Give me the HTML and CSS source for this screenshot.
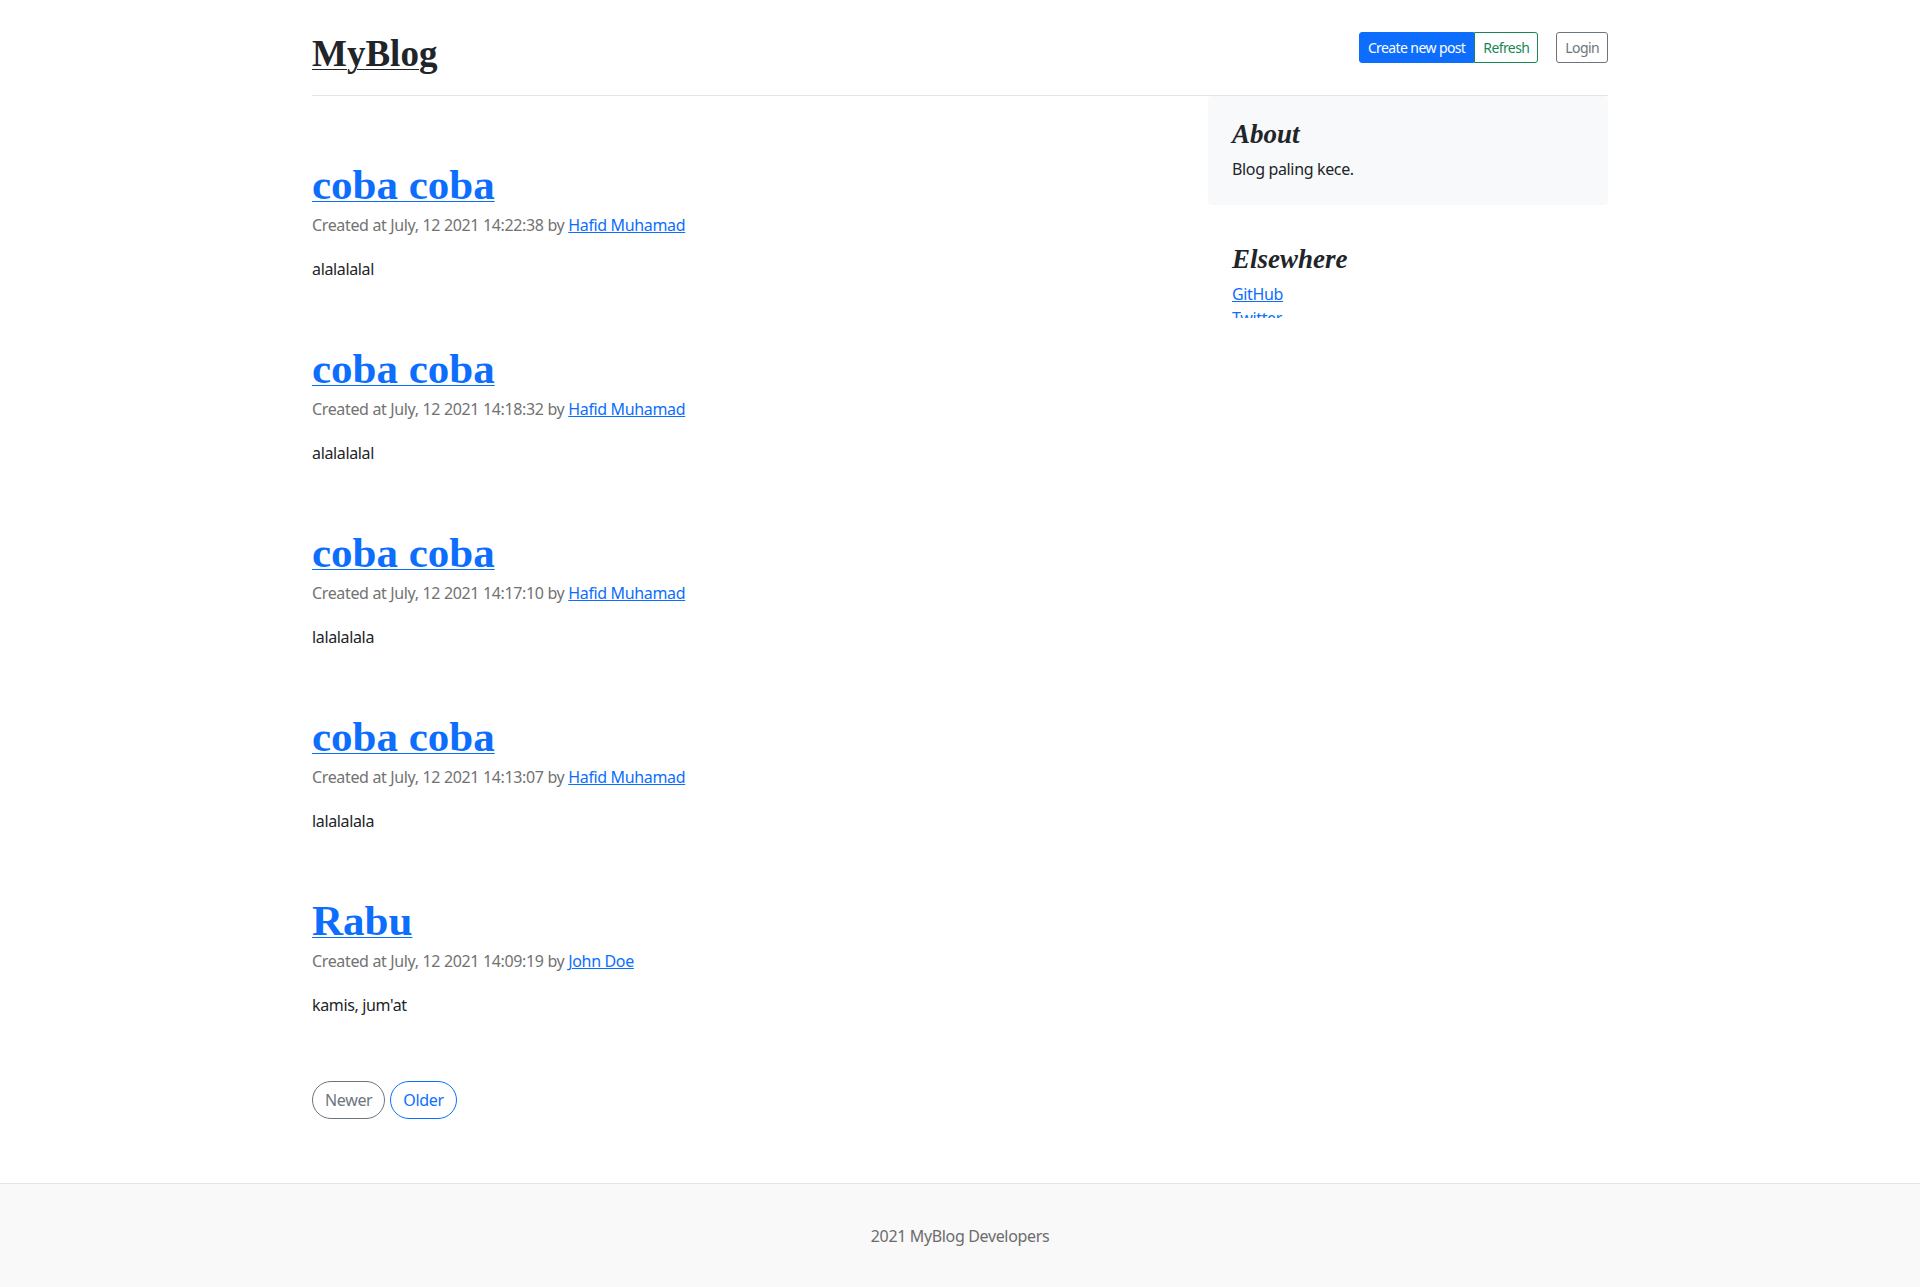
FILE: index.html
```html
<!DOCTYPE html>
<html lang="en">
<head>
<meta charset="utf-8">
<title>MyBlog</title>
<link rel="stylesheet" href="styles.css">
</head>
<body>
<div class="container">
  <header class="blog-header">
    <div class="header-row">
      <a class="blog-header-logo" href="#">MyBlog</a>
      <div class="header-actions">
        <div class="btn-group">
          <a class="btn btn-sm btn-primary" href="#">Create new post</a>
          <a class="btn btn-sm btn-outline-success" href="#">Refresh</a>
        </div>
        <a class="btn btn-sm btn-outline-secondary" href="#">Login</a>
      </div>
    </div>
  </header>

  <main class="row">
    <div class="col-main">
      <article class="blog-post">
        <h2 class="blog-post-title"><a href="#">coba coba</a></h2>
        <p class="blog-post-meta">Created at July, 12 2021 14:22:38 by <a href="#">Hafid Muhamad</a></p>
        <div class="blog-post-body">alalalalal</div>
      </article>
      <article class="blog-post">
        <h2 class="blog-post-title"><a href="#">coba coba</a></h2>
        <p class="blog-post-meta">Created at July, 12 2021 14:18:32 by <a href="#">Hafid Muhamad</a></p>
        <div class="blog-post-body">alalalalal</div>
      </article>
      <article class="blog-post">
        <h2 class="blog-post-title"><a href="#">coba coba</a></h2>
        <p class="blog-post-meta">Created at July, 12 2021 14:17:10 by <a href="#">Hafid Muhamad</a></p>
        <div class="blog-post-body">lalalalala</div>
      </article>
      <article class="blog-post">
        <h2 class="blog-post-title"><a href="#">coba coba</a></h2>
        <p class="blog-post-meta">Created at July, 12 2021 14:13:07 by <a href="#">Hafid Muhamad</a></p>
        <div class="blog-post-body">lalalalala</div>
      </article>
      <article class="blog-post">
        <h2 class="blog-post-title"><a href="#">Rabu</a></h2>
        <p class="blog-post-meta">Created at July, 12 2021 14:09:19 by <a href="#">John Doe</a></p>
        <div class="blog-post-body">kamis, jum'at</div>
      </article>

      <nav class="blog-pagination">
        <a class="btn btn-pill btn-outline-secondary" href="#">Newer</a>
        <a class="btn btn-pill btn-outline-primary" href="#">Older</a>
      </nav>
    </div>

    <aside class="col-side">
      <div class="sidebar">
        <div class="side-box side-box-light">
          <h4 class="side-title">About</h4>
          <p class="side-text">Blog paling kece.</p>
        </div>
        <div class="side-box">
          <h4 class="side-title">Elsewhere</h4>
          <ol class="side-list">
            <li><a href="#">GitHub</a></li>
            <li><a href="#">Twitter</a></li>
            <li><a href="#">Facebook</a></li>
          </ol>
        </div>
      </div>
    </aside>
  </main>
</div>

<footer class="blog-footer">
  <p class="footer-text">2021 MyBlog Developers</p>
</footer>
</body>
</html>
```

FILE: styles.css
```css
* { box-sizing: border-box; }

html, body {
  margin: 0;
  padding: 0;
}

body {
  font-family: "Noto Sans", "Open Sans", sans-serif;
  font-size: 16px;
  line-height: 24px;
  letter-spacing: -0.35px;
  color: #212529;
  background: #fff;
}

a {
  color: #0d6efd;
  text-decoration: underline;
}

.container {
  width: 1296px;
  margin: 0 auto;
}

/* Header */
.blog-header {
  padding: 16px 0;
  border-bottom: 1px solid #e5e5e5;
  line-height: 1;
}

.header-row {
  height: 63px;
  display: flex;
  justify-content: space-between;
  align-items: flex-start;
}

.blog-header-logo {
  font-family: "Liberation Serif", "Times New Roman", serif;
  font-weight: 700;
  font-size: 37px;
  line-height: 37px;
  letter-spacing: 0;
  color: #212529;
  padding-top: 19px;
  text-decoration-thickness: 1px;
  text-underline-offset: 3px;
}

.header-actions {
  display: flex;
  align-items: center;
  margin-top: 16px;
}

.btn-group {
  display: flex;
  margin-right: 18px;
}

.btn {
  display: inline-block;
  text-decoration: none;
  border: 1px solid transparent;
  background: transparent;
  white-space: nowrap;
}

.btn-sm {
  font-size: 14px;
  line-height: 21px;
  letter-spacing: -0.6px;
  padding: 4px 8px;
  border-radius: 3px;
}

.btn-group .btn:first-child {
  border-top-right-radius: 0;
  border-bottom-right-radius: 0;
}

.btn-group .btn:last-child {
  border-top-left-radius: 0;
  border-bottom-left-radius: 0;
}

.btn-primary {
  color: #fff;
  background: #0d6efd;
  border-color: #0d6efd;
}

.btn-outline-success {
  color: #198754;
  border-color: #198754;
}

.btn-outline-secondary {
  color: #6c757d;
  border-color: #6c757d;
}

.btn-outline-primary {
  color: #0d6efd;
  border-color: #0d6efd;
}

/* Layout */
.row {
  display: grid;
  grid-template-columns: 848px 400px;
  column-gap: 48px;
  align-items: start;
}

.col-main {
  padding-top: 65px;
}

/* Posts */
.blog-post {
  margin-bottom: 64px;
}

.blog-post-title {
  margin: 0 0 4px;
  font-family: "Liberation Serif", "Times New Roman", serif;
  font-weight: 700;
  font-size: 43px;
  line-height: 48px;
  letter-spacing: 0;
}

.blog-post-title a {
  text-decoration-thickness: 1px;
  text-underline-offset: 2px;
}

.blog-post-meta {
  margin: 0 0 20px;
  color: #727272;
}

.blog-post-body {
  color: #212529;
}

/* Pagination */
.blog-pagination {
  display: flex;
  gap: 5px;
  margin-bottom: 64px;
}

.btn-pill {
  font-size: 16px;
  line-height: 24px;
  padding: 6px 12px;
  border-radius: 32px;
}

/* Sidebar */
.sidebar {
  height: 222px;
  overflow: hidden;
}

.side-box {
  padding: 24px;
  margin-bottom: 16px;
  border-radius: 4px;
}

.side-box-light {
  background: #f8f9fa;
}

.side-title {
  margin: 0 0 8px;
  font-family: "Liberation Serif", "Times New Roman", serif;
  font-style: italic;
  font-weight: 700;
  font-size: 27px;
  line-height: 29px;
  letter-spacing: 0;
  color: #212529;
}

.side-text {
  margin: 0;
}

.side-list {
  list-style: none;
  margin: 0;
  padding: 0;
}

/* Footer */
.blog-footer {
  padding: 40px 0;
  text-align: center;
  background: #f9f9f9;
  border-top: 1px solid #e5e5e5;
  color: #6c6c6c;
}

.footer-text {
  margin: 0;
}
```
